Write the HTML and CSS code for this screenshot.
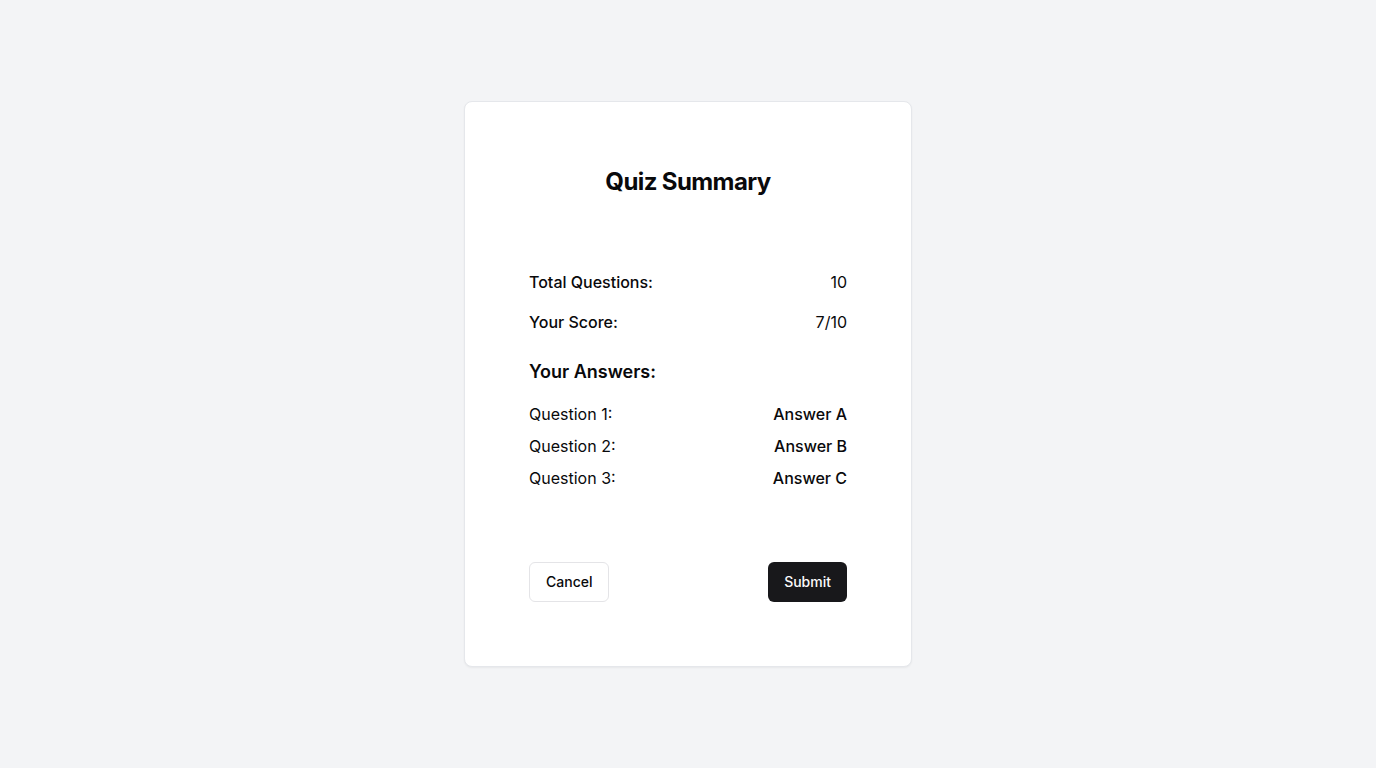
FILE: index.html
```html
<!DOCTYPE html>
<html lang="en">
<head>
<meta charset="utf-8">
<meta name="viewport" content="width=device-width, initial-scale=1">
<title>Quiz Summary</title>
<link rel="stylesheet" href="styles.css">
</head>
<body>
<main class="page">
  <section class="card">
    <header class="card-header">
      <h1 class="card-title">Quiz Summary</h1>
    </header>
    <div class="card-content">
      <dl class="totals">
        <div class="row"><dt class="strong">Total Questions:</dt><dd>10</dd></div>
        <div class="row"><dt class="strong">Your Score:</dt><dd>7/10</dd></div>
      </dl>
      <h2 class="subtitle">Your Answers:</h2>
      <dl class="answers">
        <div class="row"><dt>Question 1:</dt><dd class="strong">Answer A</dd></div>
        <div class="row"><dt>Question 2:</dt><dd class="strong">Answer B</dd></div>
        <div class="row"><dt>Question 3:</dt><dd class="strong">Answer C</dd></div>
      </dl>
    </div>
    <footer class="card-footer">
      <button type="button" class="button button-outline">Cancel</button>
      <button type="submit" class="button button-primary">Submit</button>
    </footer>
  </section>
</main>
</body>
</html>
```
FILE: styles.css
```css
*, *::before, *::after {
  box-sizing: border-box;
}

body, h1, h2, dl, dd {
  margin: 0;
}

body {
  background: #f3f4f6;
  color: #09090b;
  font-family: Inter, "Liberation Sans", sans-serif;
  font-size: 16px;
  line-height: 24px;
}

.page {
  display: flex;
  align-items: center;
  justify-content: center;
  min-height: 100vh;
}

.card {
  width: 100%;
  max-width: 448px;
  padding: 40px;
  background: #fff;
  border: 1px solid #e5e7eb;
  border-radius: 8px;
  box-shadow: 0 1px 2px rgba(0, 0, 0, 0.05);
}

.card-header {
  padding: 24px;
  text-align: center;
}

.card-title {
  font-size: 24px;
  line-height: 32px;
  font-weight: 700;
  letter-spacing: -0.025em;
}

.card-content {
  padding: 48px 24px 24px;
}

.totals {
  display: grid;
  gap: 16px;
}

.row {
  display: flex;
  justify-content: space-between;
}

.strong {
  font-weight: 500;
}

.subtitle {
  margin: 24px 0 16px;
  font-size: 18px;
  line-height: 28px;
  font-weight: 600;
}

.answers {
  display: grid;
  gap: 8px;
}

.card-footer {
  display: flex;
  justify-content: space-between;
  padding: 48px 24px 24px;
}

.button {
  height: 40px;
  padding: 0 16px;
  border: 0;
  border-radius: 6px;
  font: 500 14px/20px Inter, "Liberation Sans", sans-serif;
  cursor: pointer;
}

.button-outline {
  background: #fff;
  border: 1px solid #e4e4e7;
  color: #09090b;
}

.button-primary {
  background: #18181b;
  color: #fafafa;
}
```
